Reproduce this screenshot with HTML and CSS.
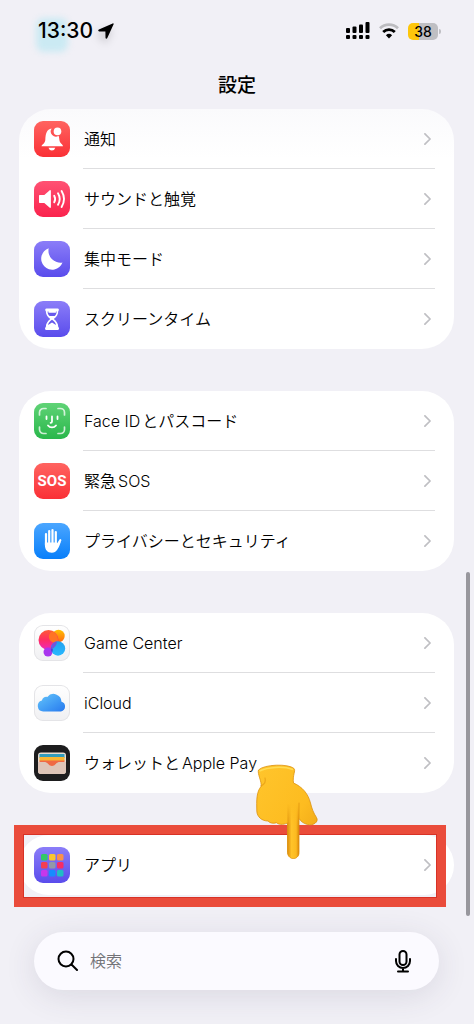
FILE: index.html
```html
<!DOCTYPE html>
<html lang="ja">
<head>
  <meta charset="UTF-8">
  <meta name="viewport" content="width=device-width, initial-scale=1">
  <title>設定</title>
  <link rel="stylesheet" href="styles.css">
</head>
<body>
  <header class="header">
    <div class="status-bar">
      <div class="status-left">
        <span class="blurred-icon"></span>
        <span class="time">13:30</span>
        <svg class="location-icon" width="16" height="16" viewBox="0 0 16 16"><path d="M14.7.4.9 6.6c-1.1.5-.8 1.800.3 1.800l6.200.1.1 6.200c0 1.100 1.300 1.400 1.800.3L15.600 1.300c.3-.7-.3-1.200-.9-.9z"/></svg>
      </div>
      <div class="status-right">
        <svg width="24" height="18" viewBox="0 0 24 18">
          <g><rect x="0" y="6" width="4" height="5" rx="1"/><rect x="6.5" y="4.500" width="4" height="6.500" rx="1"/><rect x="13" y="2.500" width="4" height="8.500" rx="1"/><rect x="19.500" y="0" width="4" height="11" rx="1"/>
          <rect x="0" y="13" width="4" height="4" rx="1"/><rect x="6.5" y="13" width="4" height="4" rx="1"/><rect x="13" y="13" width="4" height="4" rx="1"/><rect x="19.500" y="13" width="4" height="4" rx="1"/></g>
        </svg>
        <svg width="20" height="16" viewBox="0 0 20 16" fill="none" stroke-width="2.800">
          <path d="M1 5.200a13 13 0 0 1 18 0" stroke="#bcbcc0"/>
          <path d="M4.200 9a8.300 8.300 0 0 1 11.600 0" stroke="#000"/>
          <path d="M10 15.500 6.900 12.200a4.500 4.500 0 0 1 6.200 0z" fill="#000"/>
        </svg>
        <span class="battery">38</span>
      </div>
    </div>
    <h1 class="title">設定</h1>
  </header>

  <main class="settings">
    <ul class="group group-top">
      <li class="row">
        <a href="#notifications">
          <svg class="icon icon-red" viewBox="0 0 36 36" fill="#fff"><path d="M7.500 25.200c0-1.600 3.500-2.500 3.800-6.300.3-6.200 1.300-10.700 6.300-11.400a5.200 5.200 0 0 0 7 7.300c.6 1.400.6 2.900.8 4.300.4 3.400 3.600 4.500 3.600 6.100z"/><path d="M14.500 26.800h6.800a3.500 3.500 0 0 1-6.800 0z"/><circle cx="23.500" cy="10.400" r="3.800"/></svg>
          <span class="label">通知</span>
          <svg class="chevron" viewBox="0 0 8 14"><path d="m1 1 6 6-6 6"/></svg>
        </a>
      </li>
      <li class="row">
        <a href="#sounds">
          <svg class="icon icon-pink" viewBox="0 0 36 36" fill="#fff"><path d="M6 14h4.300l5.200-4.600c.7-.6 1.400-.2 1.400.6v16c0 .8-.7 1.200-1.400.6L10.300 22H6c-.7 0-1-.4-1-1v-6c0-.6.3-1 1-1z"/><g fill="none" stroke="#fff" stroke-width="1.900" stroke-linecap="round"><path d="M20.200 14.700a6.500 6.500 0 0 1 0 6.600M24 12.300a11 11 0 0 1 0 11.400M27.600 10a15.500 15.500 0 0 1 0 16"/></g></svg>
          <span class="label">サウンドと触覚</span>
          <svg class="chevron" viewBox="0 0 8 14"><path d="m1 1 6 6-6 6"/></svg>
        </a>
      </li>
      <li class="row">
        <a href="#focus">
          <svg class="icon icon-indigo" viewBox="0 0 36 36" fill="#fff"><path d="M14.700 7.200A12 12 0 0 0 28.500 21.500 11 11 0 1 1 14.700 7.200z"/></svg>
          <span class="label">集中モード</span>
          <svg class="chevron" viewBox="0 0 8 14"><path d="m1 1 6 6-6 6"/></svg>
        </a>
      </li>
      <li class="row">
        <a href="#screen-time">
          <svg class="icon icon-indigo" viewBox="0 0 36 36"><path d="M12.500 7.500h11.200c1.300 0 1.600 2 .6 2.600 0 3.800-2 6-4.500 7.900 2.500 2 4.500 4.400 4.500 8 1.200.7.900 3-.6 3H12.300c-1.500 0-1.700-2.300-.5-3 0-3.600 2-6 4.500-8-2.600-1.900-4.500-4.100-4.500-7.900-1-.6-.700-2.600.7-2.600z" fill="#fff"/><path d="M13.600 10.500h9c0 2-.8 3.500-2 4.500h-5c-1.200-1-2-2.500-2-4.500zM18 18.800c1.900 1 3.600 3.100 4 5.100L18 21.500l-4 2.400c.5-2 2.100-4.100 4-5.100z" fill="#6759ed"/><path d="M14.500 10h7.400v1.700h-7.400z" fill="#fff"/></svg>
          <span class="label">スクリーンタイム</span>
          <svg class="chevron" viewBox="0 0 8 14"><path d="m1 1 6 6-6 6"/></svg>
        </a>
      </li>
    </ul>

    <ul class="group">
      <li class="row">
        <a href="#face-id">
          <svg class="icon icon-green" viewBox="0 0 36 36" fill="none" stroke="#fff" stroke-linecap="round"><path d="M5.500 12V9.500a4 4 0 0 1 4-4H12M24 5.500h2.500a4 4 0 0 1 4 4V12M30.500 24v2.500a4 4 0 0 1-4 4H24M12 30.500H9.500a4 4 0 0 1-4-4V24" stroke-width="1.700" opacity=".75"/><path d="M12.500 13.500V16M23.500 13.500V16M18 13.500v5c0 .9-.4 1.300-1.400 1.300M14 22.500c2 2.500 6 2.500 8 0" stroke-width="1.800"/></svg>
          <span class="label"><span class="latin latin-start">Face ID</span>とパスコード</span>
          <svg class="chevron" viewBox="0 0 8 14"><path d="m1 1 6 6-6 6"/></svg>
        </a>
      </li>
      <li class="row">
        <a href="#sos">
          <span class="icon icon-red sos">SOS</span>
          <span class="label">緊急<span class="latin latin-end">SOS</span></span>
          <svg class="chevron" viewBox="0 0 8 14"><path d="m1 1 6 6-6 6"/></svg>
        </a>
      </li>
      <li class="row">
        <a href="#privacy">
          <svg class="icon icon-blue" viewBox="0 0 36 36"><path d="M12 11v11M15.200 8v13M18.500 7v14M21.800 9v13M22.500 23.500l3.800-6.300" stroke="#fff" stroke-width="2.200" stroke-linecap="round"/><path d="M10.900 19.500h12l1.300 1.500 3-3.200c-1 3-2.200 6.500-4 9-1.300 1.900-3 2.900-5.300 2.900-4.700 0-7-3.200-7-7.700z" fill="#fff"/></svg>
          <span class="label">プライバシーとセキュリティ</span>
          <svg class="chevron" viewBox="0 0 8 14"><path d="m1 1 6 6-6 6"/></svg>
        </a>
      </li>
    </ul>

    <ul class="group">
      <li class="row">
        <a href="#game-center">
          <svg class="icon icon-white" viewBox="0 0 36 36">
            <defs>
              <linearGradient id="gc-red" x1="0" y1="0" x2="0" y2="1"><stop offset="0" stop-color="#ff5a35"/><stop offset=".5" stop-color="#ff2d63"/><stop offset="1" stop-color="#ed27bd"/></linearGradient>
              <linearGradient id="gc-orange" x1="0" y1="0" x2="0" y2="1"><stop offset="0" stop-color="#ffc000"/><stop offset="1" stop-color="#ff6915"/></linearGradient>
              <linearGradient id="gc-blue" x1="0" y1="0" x2="0" y2="1"><stop offset="0" stop-color="#20a0ef"/><stop offset="1" stop-color="#28b9ff"/></linearGradient>
            </defs>
            <circle cx="24.500" cy="11" r="6.200" fill="url(#gc-orange)"/>
            <circle cx="14.500" cy="15" r="10" fill="url(#gc-red)"/>
            <path d="M18.500 5.900a10 10 0 0 1 5.200 11.300 6.200 6.200 0 0 1-5.200-11.300z" fill="#ff7424"/>
            <circle cx="14" cy="27" r="4.500" fill="#a936ee"/>
            <circle cx="24" cy="23.500" r="7.200" fill="url(#gc-blue)"/>
            <path d="M17 21.800a7.200 7.200 0 0 0 1 5.800 4.500 4.500 0 0 0-1-5.800z" fill="#503dd4"/>
            <path d="M17.300 21.100a7.200 7.200 0 0 1 5.800-4.800 10 10 0 0 1-5.800 8.100z" fill="#7355dc"/>
          </svg>
          <span class="label latin">Game Center</span>
          <svg class="chevron" viewBox="0 0 8 14"><path d="m1 1 6 6-6 6"/></svg>
        </a>
      </li>
      <li class="row">
        <a href="#icloud">
          <svg class="icon icon-white" viewBox="0 0 36 36">
            <defs><linearGradient id="cloud" x1="0" y1="0" x2="1" y2="1"><stop offset="0" stop-color="#65c5fa"/><stop offset=".6" stop-color="#3e98f4"/><stop offset="1" stop-color="#2879ee"/></linearGradient></defs>
            <path d="M9.200 26.500a5.600 5.600 0 0 1-1.300-11 5 5 0 0 1 5.400-3.600 8 8 0 0 1 14.200 4.900 5 5 0 0 1-.5 9.700z" fill="url(#cloud)"/>
          </svg>
          <span class="label latin">iCloud</span>
          <svg class="chevron" viewBox="0 0 8 14"><path d="m1 1 6 6-6 6"/></svg>
        </a>
      </li>
      <li class="row">
        <a href="#wallet">
          <svg class="icon icon-black" viewBox="0 0 36 36"><defs><clipPath id="wallet-clip"><rect x="4" y="7.500" width="28" height="21.500" rx="3"/></clipPath></defs><g clip-path="url(#wallet-clip)"><path fill="#e9ddd0" d="M4 7h28v23H4z"/><path fill="#329dbc" d="M5.500 9h25v4h-25z"/><path fill="#f9b631" d="M5.500 12h25v4h-25z"/><path fill="#ef6945" d="M5.500 15.500h25V19h-25z"/><path fill="#dec5b8" d="M4 17h8c2.300 0 2.500 4 6 4s3.700-4 6-4h8v13H4z"/><path fill="#ef6945" d="M11 17h14c-3 0-3.400 4-7 4S14 17 11 17z"/></g></svg>
          <span class="label">ウォレットと<span class="latin latin-end">Apple Pay</span></span>
          <svg class="chevron" viewBox="0 0 8 14"><path d="m1 1 6 6-6 6"/></svg>
        </a>
      </li>
    </ul>

    <div class="highlighted">
      <ul class="group">
        <li class="row">
          <a href="#apps">
            <svg class="icon icon-indigo" viewBox="0 0 36 36"><rect x="7" y="7" width="6.500" height="6.500" rx="1.500" fill="#31c966"/><rect x="15" y="7" width="6.500" height="6.500" rx="1.500" fill="#fbc72e"/><rect x="23" y="7" width="6.500" height="6.500" rx="1.500" fill="#fa914a"/><rect x="7" y="15" width="6.500" height="6.500" rx="1.500" fill="#f53e50"/><rect x="15" y="15" width="6.500" height="6.500" rx="1.500" fill="#9298a8"/><rect x="23" y="15" width="6.500" height="6.500" rx="1.500" fill="#f72c67"/><rect x="7" y="23" width="6.500" height="6.500" rx="1.500" fill="#c637eb"/><rect x="15" y="23" width="6.500" height="6.500" rx="1.500" fill="#168bff"/><rect x="23" y="23" width="6.500" height="6.500" rx="1.500" fill="#1fbec4"/></svg>
            <span class="label">アプリ</span>
            <svg class="chevron" viewBox="0 0 8 14"><path d="m1 1 6 6-6 6"/></svg>
          </a>
        </li>
      </ul>
      <span class="frame"></span>
      <svg class="finger" width="62" height="96" viewBox="0 0 62 96">
        <defs>
          <linearGradient id="skin" x1="0" y1="0" x2="1" y2="1"><stop offset="0" stop-color="#ffc52c"/><stop offset=".6" stop-color="#fdbc20"/><stop offset="1" stop-color="#eaa014"/></linearGradient>
          <linearGradient id="shade" x1="0" y1="0" x2="1" y2="0"><stop offset="0" stop-color="#dc8d0d"/><stop offset=".35" stop-color="#ffc329"/><stop offset=".75" stop-color="#fcba20"/><stop offset="1" stop-color="#d98609"/></linearGradient>
          <linearGradient id="fade" x1="0" y1="0" x2="0" y2="1"><stop offset="0" stop-color="#000"/><stop offset=".4" stop-color="#fff"/></linearGradient>
          <mask id="finger-mask"><path d="M30 40h15v56H30z" fill="url(#fade)"/></mask>
        </defs>
        <path d="M2.500 6C8 .2 32.500-.5 38 4.500c2 2-1.700 7-.5 14.500 9 4 14.500 10.500 17 20 1.300 5.500 3 10 6 14.500 2.600 4.200-3 8.500-9 7-4-1-6.500-3-8.500-6v34c0 8-11 8-11.500 0L31.500 59c-5 2.200-9 1.500-11-.3-3 1-6.500.7-8.500-1.700C6 57 1 53 .8 47 .5 36 .5 28 5 22.500c1-5-3.800-12.500-2.500-16.500z" fill="url(#skin)" stroke="#dc920e" stroke-width=".8"/>
        <path d="M31.500 40v48.500c.5 7.500 11.500 7.500 11.500 0V40" fill="url(#shade)" mask="url(#finger-mask)"/>
        <path d="M43 54V39M5 22c4-2 5-5 4-8" fill="none" stroke="#dc8f0d" stroke-width="1.200" stroke-linecap="round" opacity=".55"/>
        <path d="M3.500 7c8-4 24-5 33.500-1.500" fill="none" stroke="#ffdc54" stroke-width="1.500"/>
      </svg>
    </div>
  </main>

  <form class="search" role="search">
    <svg class="search-icon" width="22" height="22" viewBox="0 0 22 22"><circle cx="9" cy="9" r="7.500"/><path d="m14.500 14.500 5.500 5.500"/></svg>
    <input type="search" placeholder="検索" aria-label="検索">
    <button type="button" aria-label="音声入力">
      <svg width="16" height="24" viewBox="0 0 16 24"><rect x="4.500" y="2" width="7" height="14" rx="3.500"/><path d="M1 10v2a7 7 0 0 0 14 0v-2M8 19v3M3 22.500h10"/></svg>
    </button>
  </form>
  <span class="scrollbar"></span>
</body>
</html>
```
FILE: styles.css
```css
* {
  box-sizing: border-box;
}

body {
  position: relative;
  margin: 0;
  min-height: 100vh;
  display: flex;
  flex-direction: column;
  background: #f1f0f6;
  color: #000;
  font-family: Inter, "Noto Sans CJK JP", sans-serif;
  font-size: 16px;
}

ul {
  list-style: none;
  margin: 0;
  padding: 0;
}

/* ステータスバー */
.status-bar {
  display: flex;
  justify-content: space-between;
  align-items: center;
  height: 62px;
  padding: 0 36px 0 38px;
}

.status-left,
.status-right {
  position: relative;
  display: flex;
  align-items: center;
}

.status-left {
  gap: 5px;
}

.status-right {
  gap: 9px;
}

.blurred-icon {
  position: absolute;
  left: -2px;
  top: 0;
  width: 32px;
  height: 34px;
  border-radius: 8px;
  background: #cbeaf3;
  filter: blur(3px);
}

.time {
  position: relative;
  font-size: 21px;
  font-weight: 500;
  line-height: 26px;
}

.location-icon {
  filter: drop-shadow(-2px 5px 4px rgba(0, 0, 0, 0.2));
}

.battery {
  position: relative;
  width: 30px;
  height: 17px;
  border-radius: 5px;
  background: linear-gradient(90deg, #fdc60b 38%, #bfbfc3 38%);
  font-size: 14px;
  font-weight: 500;
  line-height: 17px;
  text-align: center;
}

.battery::after {
  content: "";
  position: absolute;
  right: -3px;
  top: 6px;
  width: 2px;
  height: 5px;
  border-radius: 0 2px 2px 0;
  background: #bfbfc3;
}

.title {
  margin: 0;
  height: 47px;
  font-size: 19px;
  font-weight: 500;
  line-height: 47px;
  text-align: center;
}

/* 設定リスト */
.settings {
  display: flex;
  flex-direction: column;
  gap: 42px;
  padding: 0 20px 0 19px;
}

.group {
  border-radius: 32px;
  background: #fff;
}

.group-top {
  background: linear-gradient(#fafafc, #fff 50px);
}

.row a {
  display: flex;
  align-items: center;
  height: 60px;
  padding-left: 15px;
  color: inherit;
  text-decoration: none;
}

.label {
  flex: 1;
  margin-left: 14px;
  font-weight: 350;
  line-height: 60px;
}

.latin-start {
  margin-right: 2px;
}

.latin-end {
  margin-left: 2px;
}

.row + .row {
  position: relative;
}

.row + .row::before {
  content: "";
  position: absolute;
  left: 64px;
  right: 19px;
  top: -1px;
  height: 1px;
  background: #dedee0;
}

.icon {
  width: 36px;
  height: 36px;
  border-radius: 9px;
}

.icon-red {
  background: linear-gradient(#ff6460, #fa3036);
}

.icon-pink {
  background: linear-gradient(#ff5273, #fa234d);
}

.icon-indigo {
  background: linear-gradient(#8b7df8, #5a4cec);
}

.icon-green {
  background: linear-gradient(#60d376, #29b74b);
}

.icon-blue {
  background: linear-gradient(#4ba6ff, #087ffa);
}

.icon-white {
  background: linear-gradient(#fff, #f0f0f2);
  box-shadow: inset 0 0 0 1px #e4e4e7;
}

.icon-black {
  background: #1d1d1e;
}

.sos {
  color: #fff;
  font-family: Roboto, sans-serif;
  font-size: 15px;
  font-weight: 700;
  line-height: 36px;
  text-align: center;
}

.chevron {
  width: 7px;
  height: 12px;
  margin-right: 23px;
  fill: none;
  stroke: #bfbfc3;
  stroke-width: 2;
  stroke-linecap: round;
  stroke-linejoin: round;
}

/* 強調枠 */
.highlighted {
  position: relative;
}

.frame {
  position: absolute;
  top: -10px;
  right: 8px;
  bottom: -12px;
  left: -5px;
  border: 10px solid #ea4c3b;
  outline: 1px solid #d83226;
  outline-offset: -10px;
  pointer-events: none;
}

.finger {
  position: absolute;
  left: 237px;
  top: -71px;
  pointer-events: none;
}

/* 検索バー */
.search {
  display: flex;
  align-items: center;
  height: 58px;
  margin: 37px 35px 34px 34px;
  padding: 0 28px 0 23px;
  border-radius: 29px;
  background: #fbfaff;
  box-shadow: 0 6px 32px rgba(60, 50, 80, 0.12);
}

.search svg {
  fill: none;
  stroke: #000;
  stroke-width: 2;
  stroke-linecap: round;
}

.search input {
  flex: 1;
  min-width: 0;
  margin-left: 11px;
  padding: 0;
  border: none;
  outline: none;
  background: none;
  font: inherit;
  font-weight: 350;
}

.search input::placeholder {
  color: #727277;
}

.search button {
  display: flex;
  padding: 0;
  border: none;
  background: none;
  cursor: pointer;
}

.scrollbar {
  position: absolute;
  right: 4px;
  top: 572px;
  width: 4px;
  height: 344px;
  border-radius: 2px;
  background: #98979d;
}
```
